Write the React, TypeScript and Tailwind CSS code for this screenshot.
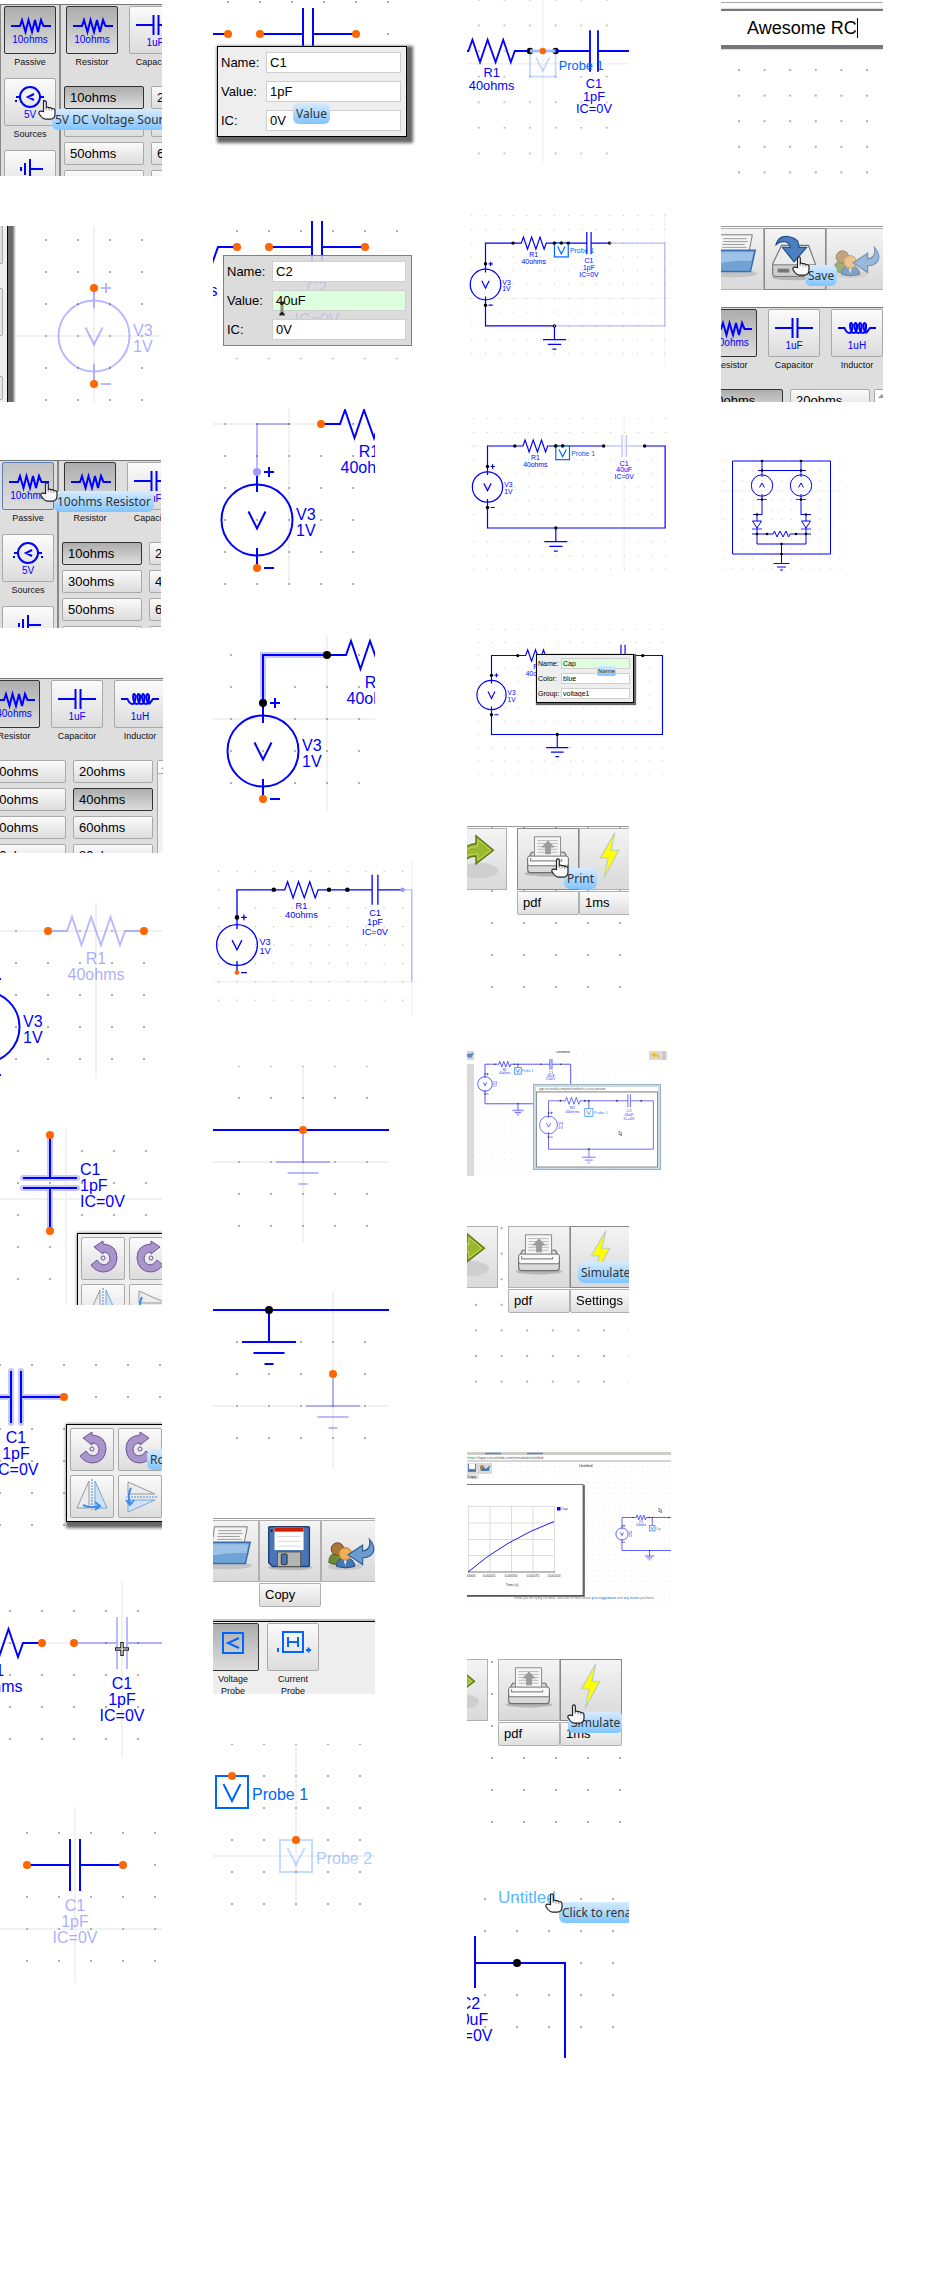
import React, { useId } from 'react';
import type { ReactNode } from 'react';

const BLUE = '#0000ff';
const ORANGE = '#ff6600';
const PROBE = '#0066ff';
const SANS = "'Liberation Sans', Arial, sans-serif";

type Pt = { x: number; y: number };

/* ---------- schematic primitives (grid pitch is 32 units) ---------- */

function Grid({ x, y, step = 32, dot = 2 }: Pt & { step?: number; dot?: number }) {
  const id = useId();
  return (
    <>
      <pattern id={id} x={x - dot / 2} y={y - dot / 2} width={step} height={step} patternUnits="userSpaceOnUse">
        <rect width={dot} height={dot} fill="#b0b0b0" />
      </pattern>
      <rect x="-1000" y="-1000" width="3000" height="3000" fill={`url(#${id})`} />
    </>
  );
}

function Cross({ x, y }: { x?: number; y?: number }) {
  return (
    <path
      d={`${x === undefined ? '' : `M${x} -1000V2000`}${y === undefined ? '' : `M-1000 ${y}H2000`}`}
      stroke="#f1f1f1"
      strokeWidth="2"
      fill="none"
    />
  );
}

function Node({ x, y, color = '#000' }: Pt & { color?: string }) {
  return <circle cx={x} cy={y} r="4" fill={color} />;
}

/* Line width is inherited, so that reduced drawings can use a heavier pen. */
function Stroke({ d, faint, halo, color = BLUE }: { d: string; faint?: boolean; halo?: boolean; color?: string }) {
  return (
    <>
      {halo && <path d={d} stroke="#c8c8ff" strokeWidth="6" strokeLinecap="round" fill="none" />}
      <path d={d} stroke={color} fill="none" opacity={faint ? 0.27 : 1} />
    </>
  );
}

function Lines({
  x,
  y,
  rows,
  anchor = 'start',
  faint,
  color = BLUE,
}: Pt & { rows: string[]; anchor?: 'start' | 'middle'; faint?: boolean; color?: string }) {
  return (
    <g fontFamily={SANS} fontSize="16" fill={color} textAnchor={anchor} opacity={faint ? 0.32 : 1}>
      {rows.map((r, i) => (
        <text key={r} x={x} y={y + i * 16}>
          {r}
        </text>
      ))}
    </g>
  );
}

function Source({ x, y, faint, rows = ['V3', '1V'] }: Pt & { faint?: boolean; rows?: string[] }) {
  return (
    <>
      <g transform={`translate(${x} ${y})`} opacity={faint ? 0.27 : 1} stroke={BLUE} fill="none">
        <circle r="35.5" />
        <path d="M0 -48V-28M0 28V48M-8.500 -8.500L0 8.500L8.500 -8.500M7 -48H17M12 -53V-43M7 48H17" />
      </g>
      <Lines x={x + 39} y={y} rows={rows} faint={faint} />
    </>
  );
}

function Resistor({ x, y, faint, rows = ['R1', '40ohms'] }: Pt & { faint?: boolean; rows?: string[] }) {
  return (
    <>
      <g transform={`translate(${x} ${y})`}>
        <Stroke
          faint={faint}
          d="M-48 0H-29L-24 -14L-14.500 14L-5 -14L5 14L14.500 -14L24 14L29 0H48"
        />
      </g>
      <Lines x={x} y={y + 33} rows={rows} anchor="middle" faint={faint} />
    </>
  );
}

function Capacitor({
  x,
  y,
  faint,
  halo,
  faintLabel,
  rows = ['C1', '1pF', 'IC=0V'],
}: Pt & { faint?: boolean; halo?: boolean; faintLabel?: boolean; rows?: string[] }) {
  return (
    <>
      <g transform={`translate(${x} ${y})`}>
        <Stroke faint={faint} halo={halo} d="M-48 0H-5M-5 -26V26M5 -26V26M5 0H48" />
      </g>
      <Lines x={x} y={y + 46} rows={rows} anchor="middle" faint={faintLabel} />
    </>
  );
}

function Ground({ x, y, faint }: Pt & { faint?: boolean }) {
  return (
    <g transform={`translate(${x} ${y})`}>
      <Stroke faint={faint} d="M0 0V32M-27 32H27M-15.500 43H15.500M-4.500 54H4.500" />
    </g>
  );
}

function Probe({
  x,
  y,
  faint,
  faintLabel,
  label,
}: Pt & { faint?: boolean; faintLabel?: boolean; label: string }) {
  return (
    <>
      <g transform={`translate(${x} ${y})`} opacity={faint ? 0.22 : 1}>
        <rect x="-16" y="0" width="32" height="32" fill={faint ? 'none' : '#fff'} stroke={PROBE} />
        <path d="M-8.500 8L0 25L8.500 8" stroke={PROBE} fill="none" />
      </g>
      <Lines x={x + 20} y={y + 24} rows={[label]} color={PROBE} faint={faintLabel} />
    </>
  );
}

/* ---------- frames ---------- */

function Shot({ size, label, children }: { size: string; label: string; children: ReactNode }) {
  return (
    <figure aria-label={label} className={`relative shrink-0 overflow-hidden bg-white ${size}`}>
      {children}
    </figure>
  );
}

function Canvas({ children }: { children: ReactNode }) {
  return (
    <svg className="absolute inset-0 size-full" strokeWidth="2" aria-hidden="true">
      {children}
    </svg>
  );
}

function Tip({ place, small, children }: { place: string; small?: boolean; children: ReactNode }) {
  return (
    <span
      role="tooltip"
      className={`absolute z-10 whitespace-nowrap bg-linear-to-b from-[#d6ebff] to-[#80c5ff] font-['Noto_Sans',sans-serif] text-[#333] ${
        small ? 'rounded-xs px-px text-[6px] leading-[10px]' : 'rounded-md px-[3px] text-[12px] leading-[21px]'
      } ${place}`}
    >
      {children}
    </span>
  );
}

function Hand({ place }: { place: string }) {
  return (
    <svg className={`absolute z-20 h-5 w-[18px] ${place}`} viewBox="0 0 18 20" aria-hidden="true">
      <path
        d="M5.500 11.500V2.200Q5.500 .8 6.900 .8T8.300 2.200V7.500Q9.500 6.500 11 7.800Q12.500 7 13.800 8.600Q17 8 17 11V14.500Q16.500 19 12.500 19.200H7.500Q5 19 3 16.500L.9 13.500Q.6 11 3 11.200Z"
        fill="#fafafa"
        stroke="#222"
        strokeWidth="1.200"
      />
      <path d="M8.300 7.500V10M11 8V10.500M13.800 8.600V11" stroke="#777" strokeWidth=".8" />
    </svg>
  );
}

/* ---------- component palette ---------- */

const face = 'overflow-hidden rounded-xs border bg-linear-to-b';
const plain = 'border-[#a9a9a9] from-[#fbfbfb] to-[#dcdcdc]';
const pressed = 'border-[#333] from-[#adadad] to-[#dedede]';
const hovered = 'border-[#5b7fb5] from-[#c2c2c2] to-[#dedede]';

const glyphs: Record<string, ReactNode> = {
  resistor: <path d="M6 19H15L17 13L20.500 25L23.500 13L27 25L30 13L33 25L36 13L38.500 19H46" />,
  capacitor: <path d="M6 18H22.500M23.500 8V28M28.500 8V28M29.500 18H44" />,
  inductor: (
    <path d="M6 18H12.500Q14.500 23 17.500 23T20.500 14.500Q18.500 11 18 15.500Q18.500 23 22 23T25 14.500Q23 11 22.500 15.500Q23 23 26.500 23T29.500 14.500Q27.500 11 27 15.500Q27.500 23 31 23T34 14.500Q32 11 31.500 15.500Q32 23 34.500 22.500L38 18H44" />
  ),
  source: (
    <>
      <circle cx="25" cy="18" r="10" />
      <path d="M11 18H15M35 18H39M29 15L23 18L29 21M11 21V23M39 21V23" />
    </>
  ),
  ground: <path d="M25 8V28M25 18H38M20 12V24M16 16V20" />,
};

function PartButton({
  glyph,
  value,
  name,
  look = plain,
}: {
  glyph: string;
  value: string;
  name: string;
  look?: string;
}) {
  return (
    <div className="flex w-[52px] shrink-0 flex-col items-center">
      <button type="button" aria-label={name} className={`h-12 w-[52px] ${face} ${look}`}>
        <svg viewBox="0 0 50 46" className="h-[46px] w-[50px]" aria-hidden="true">
          <g stroke={BLUE} strokeWidth="2" fill="none">
            {glyphs[glyph]}
          </g>
          <text
            x="25"
            y={glyph === 'resistor' ? 36 : 39}
            textAnchor="middle"
            fontFamily={SANS}
            fontSize="10"
            fill={BLUE}
          >
            {value}
          </text>
        </svg>
      </button>
      <span className="h-6 pt-[2px] text-[9px] leading-3 text-[#111]">{name}</span>
    </div>
  );
}

function PartRow({ ohms }: { ohms: string }) {
  return (
    <div className="flex gap-[11px] pl-[5px]">
      <PartButton glyph="resistor" value={ohms} name="Resistor" look={pressed} />
      <PartButton glyph="capacitor" value="1uF" name="Capacitor" />
      <PartButton glyph="inductor" value="1uH" name="Inductor" />
    </div>
  );
}

function Values({ active }: { active: string }) {
  return (
    <div className="flex pl-[3px] pt-2">
      <div className="grid grid-cols-[80px_80px] gap-x-[7px] gap-y-[5px]">
        {['10ohms', '20ohms', '30ohms', '40ohms', '50ohms', '60ohms', '70ohms', '80ohms'].map((v) => (
          <button
            key={v}
            type="button"
            className={`h-[23px] pl-[5px] text-left text-[13px] leading-5 text-black ${face} ${
              v === active ? pressed : plain
            }`}
          >
            {v}
          </button>
        ))}
      </div>
      <div className="ml-1 w-4 shrink-0 rounded-t-xs border border-[#a9a9a9] bg-[#f2f2f2]">
        <div className="flex h-[13px] items-center justify-center border-b border-[#a9a9a9] bg-white">
          <svg viewBox="0 0 8 4" className="h-1 w-2" aria-hidden="true">
            <path d="M0 4L4 0L8 4Z" fill="#999" />
          </svg>
        </div>
      </div>
    </div>
  );
}

function Palette({ hover, shift }: { hover: 'passive' | 'sources'; shift: string }) {
  return (
    <div className={`flex h-full border-t border-[#777] bg-[#dedede] ${shift}`}>
      <div className="w-[61px] shrink-0 border-r-2 border-l border-[#888] pt-px pl-[3px]">
        <PartButton
          glyph="resistor"
          value="10ohms"
          name="Passive"
          look={hover === 'passive' ? hovered : pressed}
        />
        <PartButton glyph="source" value="5V" name="Sources" />
        <PartButton glyph="ground" value="" name="Ground" />
      </div>
      <div className="shrink-0 pt-px">
        <PartRow ohms="10ohms" />
        <Values active="10ohms" />
      </div>
    </div>
  );
}

/* ---------- toolbar ---------- */

function FolderIcon() {
  return (
    <svg viewBox="0 0 62 62" className="size-[60px]" aria-hidden="true">
      <ellipse cx="30" cy="46" rx="26" ry="4" fill="#c4c4c4" />
      <path d="M17 6H51L47 26L14 28Z" fill="#f4f4f4" stroke="#777" />
      <path d="M21 10H45M21 13H46M20 16H43M20 19H45" stroke="#999" />
      <path d="M8 22H54L49 44H4Z" fill="#6fa3d6" stroke="#3a6ca8" strokeWidth="1.500" />
      <path d="M10 24H52L50 33Q30 32 8 37Z" fill="#9cc2e6" />
    </svg>
  );
}

function FloppyIcon() {
  return (
    <svg viewBox="0 0 62 62" className="size-[60px]" aria-hidden="true">
      <ellipse cx="31" cy="48" rx="23" ry="3" fill="#b9b9b9" />
      <path d="M9 7Q9 6 10 6H50Q51 6 51 7V46Q51 47 50 47H13L9 43Z" fill="#4a74b4" stroke="#1f3f75" strokeWidth="1.500" />
      <rect x="15" y="7" width="30" height="23" fill="#fff" />
      <rect x="15" y="7" width="30" height="4" fill="#d41c00" />
      <path d="M18 16H42M18 21H42M18 26H42" stroke="#d5d5d5" />
      <rect x="11" y="9" width="2" height="2" fill="#111" />
      <rect x="18" y="32" width="24" height="15" rx="1" fill="#b5b5b0" stroke="#555" />
      <rect x="22" y="34" width="6" height="11" rx="1" fill="#4a74b4" stroke="#333" />
    </svg>
  );
}

function ShareIcon() {
  return (
    <svg viewBox="0 0 62 62" className="size-[60px]" aria-hidden="true">
      <ellipse cx="24" cy="47" rx="18" ry="4" fill="#c9c9c9" />
      <path d="M7 43Q7 33 16 33T25 43Q16 47 7 43Z" fill="#6d8b35" stroke="#47611c" />
      <circle cx="16" cy="29" r="6.500" fill="#a9773a" stroke="#6b4518" />
      <path d="M15 47Q15 38 24 38T34 47Q24 50 15 47Z" fill="#4577b5" stroke="#224a85" />
      <path d="M22 38L24 46L26 38Z" fill="#fff" />
      <circle cx="24" cy="34" r="6.500" fill="#f2ae55" stroke="#b87418" />
      <path
        d="M49 19Q55 26 53 32Q50 38 42 38V45L27 35L42 25V31Q51 30 49 19Z"
        fill="#6b9bd1"
        stroke="#2e5c99"
        strokeWidth="1.200"
      />
    </svg>
  );
}

function ForwardIcon() {
  return (
    <svg viewBox="0 0 62 62" className="size-[60px]" aria-hidden="true">
      <ellipse cx="34" cy="43" rx="20" ry="8" fill="#cfcfcf" />
      <path d="M31 7L49 22L31 36V28Q20 28 16 38Q10 18 31 15Z" fill="#99b82c" stroke="#5f7a10" strokeWidth="1.500" />
      <path d="M33 11L46 22L33 32V26Q22 25 17 32Q16 19 33 18Z" fill="none" stroke="#c3d96c" />
    </svg>
  );
}

function PrinterIcon() {
  return (
    <svg viewBox="0 0 62 62" className="size-[60px]" aria-hidden="true">
      <ellipse cx="31" cy="46" rx="24" ry="3" fill="#b5b5b5" />
      <path d="M14 24H48L52 32V42Q52 45 49 45H13Q10 45 10 42V32Z" fill="#dadada" stroke="#6e6e6e" strokeWidth="1.200" />
      <path d="M17 8H44V30H17Z" fill="#f5f5f5" stroke="#888" />
      <path d="M20 12H41M20 15H41M20 18H41M20 21H41M20 24H41" stroke="#b9b9b9" />
      <path d="M31 12L38 19H34V26H28V19H24Z" fill="#9b9b9b" />
      <rect x="10" y="28" width="42" height="10" rx="2" fill="#fafafa" stroke="#6e6e6e" />
      <path d="M13 30V33H45V31" fill="none" stroke="#8a8a8a" strokeWidth="1.200" />
    </svg>
  );
}

function BoltIcon() {
  return (
    <svg viewBox="0 0 62 62" className="size-[60px]" aria-hidden="true">
      <path d="M36 4L21 30H29L25 50L40 22H32Z" fill="#ffff00" stroke="#b9cfc0" strokeWidth="1.200" />
    </svg>
  );
}

function DriveIcon() {
  return (
    <svg viewBox="0 0 62 62" className="size-[60px]" aria-hidden="true">
      <ellipse cx="31" cy="50" rx="24" ry="3" fill="#b5b5b5" />
      <path d="M17 17H45L52 36V46Q52 49 49 49H11Q8 49 8 46V36Z" fill="#ececec" stroke="#777" strokeWidth="1.200" />
      <path d="M8 37H52V46Q52 49 49 49H11Q8 49 8 46Z" fill="#cfcfcf" stroke="#777" />
      <rect x="13" y="41" width="12" height="4" fill="#777" />
      <path
        d="M11 17Q14 6 25 8Q36 10 35 19H43L30 34L18 19H26Q25 13 19 13Q14 13 11 17Z"
        fill="#4b7fc0"
        stroke="#23508c"
        strokeWidth="1.200"
      />
    </svg>
  );
}

function Tool({
  name,
  icon,
  option,
  edge = 'border-[#b0b0b0]',
  fade,
}: {
  name: string;
  icon: ReactNode;
  option?: string;
  edge?: string;
  fade?: boolean;
}) {
  return (
    <div className="flex w-[62px] shrink-0 flex-col gap-px">
      <button
        type="button"
        aria-label={name}
        className={`h-[62px] w-[62px] overflow-hidden border bg-linear-to-b from-[#f4f4f4] to-[#d9d9d9] ${edge}`}
      >
        <span className={fade ? 'block opacity-60' : 'block'}>{icon}</span>
      </button>
      {option && (
        <button
          type="button"
          className="h-6 w-[62px] overflow-hidden rounded-b-xs border border-[#b0b0b0] bg-linear-to-b from-[#fafafa] to-[#dfdfdf] pl-[5px] text-left text-[13px] leading-[22px] text-black"
        >
          {option}
        </button>
      )}
    </div>
  );
}

/* ---------- property form ---------- */

function Form({
  rows,
  box,
  active,
  small,
}: {
  rows: [string, string][];
  box: string;
  active?: string;
  small?: boolean;
}) {
  const id = useId();
  return (
    <form className={`absolute flex flex-col border ${box} ${small ? 'gap-1 py-[3px] pr-[3px] pl-px' : 'gap-2 p-[5px] pl-[3px]'}`}>
      {rows.map(([name, value]) => (
        <div key={name} className="flex items-center">
          <label
            htmlFor={id + name}
            className={small ? 'w-[23px] text-[7px] leading-[11px]' : 'w-[45px] text-[13px] leading-[21px]'}
          >
            {name}:
          </label>
          <input
            id={id + name}
            defaultValue={value}
            className={`min-w-0 flex-1 border border-[#cfcfcf] text-black outline-none ${
              small ? 'h-[11px] px-px text-[7px]' : 'h-[21px] px-[3px] text-[13px]'
            } ${name === active ? 'bg-[#ddffdd]' : 'bg-white'}`}
          />
        </div>
      ))}
    </form>
  );
}

/* ---------- rotate / flip popup ---------- */

function TurnIcon({ flip }: { flip?: boolean }) {
  return (
    <svg viewBox="0 0 42 42" className="size-[42px]" aria-hidden="true">
      <g transform={flip ? 'translate(42 0) scale(-1 1)' : undefined}>
        <path
          d="M12 9L21 3V6Q35 7 35 20Q34 33 22 34Q14 34 9 27L15 22Q18 27 22 27Q28 26 28 20Q27 14 21 14V16Z"
          fill="#a995cc"
          stroke="#6d5399"
        />
        <circle cx="21" cy="20" r="2" fill="#eee" stroke="#6d5399" />
      </g>
    </svg>
  );
}

function MirrorIcon({ turn }: { turn?: boolean }) {
  return (
    <svg viewBox="0 0 42 42" className="size-[42px]" aria-hidden="true">
      <g transform={turn ? 'translate(0 1) rotate(90 21 20)' : undefined}>
        <path d="M18 5V32H6Z" fill="#ececec" stroke="#999" />
        <path d="M24 5V32H36Z" fill="#cfe3f7" stroke="#7fa6cf" />
        <path d="M21 3V34" stroke="#3a8cf0" strokeDasharray="2 1" />
        <path d="M12 29Q20 33 27 30M24 26L29 30L24 34" stroke="#3a8cf0" strokeWidth="2" fill="none" />
      </g>
    </svg>
  );
}

function TurnPopup({ place }: { place: string }) {
  const items: [string, ReactNode][] = [
    ['Rotate left', <TurnIcon />],
    ['Rotate right', <TurnIcon flip />],
    ['Mirror horizontally', <MirrorIcon />],
    ['Mirror vertically', <MirrorIcon turn />],
  ];
  return (
    <div
      className={`absolute grid grid-cols-[44px_44px] gap-1 border border-black bg-[#eee] p-[3px] shadow-[3px_3px_3px_3px_#666] ${place}`}
    >
      {items.map(([name, icon]) => (
        <button key={name} type="button" aria-label={name} className={`h-[43px] ${face} ${plain}`}>
          {icon}
        </button>
      ))}
    </div>
  );
}

/* ---------- columns ---------- */

function PlaceColumn() {
  return (
    <section className="flex w-[163px] shrink-0 flex-col gap-[50px]">
      <Shot size="h-[176px] w-[162px]" label="Voltage source in palette">
        <Palette hover="sources" shift="mt-1" />
        <Hand place="left-[38px] top-[100px]" />
        <Tip place="left-[52px] top-[109px]">5V DC Voltage Source</Tip>
      </Shot>
      <Shot size="h-[176px] w-[162px]" label="Placing voltage source">
        <Canvas>
          <Cross x={94} y={110} />
          <Grid x={14} y={14} />
          <Source x={94} y={110} faint />
          <Node x={94} y={62} color={ORANGE} />
          <Node x={94} y={158} color={ORANGE} />
        </Canvas>
        <div className="relative flex h-full w-4">
          <div className="w-[7px] bg-[#eee]">
            <div className="h-[38px] w-[3px] rounded-br-xs border-r border-b border-[#aaa] bg-[#ddd]" />
            <div className="mt-6 h-12 w-[3px] rounded-r-xs border-y border-r border-[#aaa] bg-[#e4e4e4]" />
            <div className="mt-10 h-6 w-[3px] rounded-r-xs border-y border-r border-[#aaa] bg-[#e4e4e4]" />
          </div>
          <div className="w-px bg-black" />
          <div className="w-[5px] bg-[#6b6b6b]" />
          <div className="w-[3px] bg-linear-to-r from-[#888] to-white" />
        </div>
      </Shot>
      <Shot size="h-[176px] w-[161px]" label="Resistor in palette">
        <Palette hover="passive" shift="mt-2 -ml-[2px]" />
        <Hand place="left-[40px] top-[30px]" />
        <Tip place="left-[54px] top-[39px]">10ohms Resistor</Tip>
      </Shot>
      <Shot size="h-[175px] w-[163px]" label="Resistor values">
        <div className="-ml-[17px] h-full w-[200px] border-t border-[#777] bg-[#dedede] pt-px">
          <PartRow ohms="40ohms" />
          <Values active="40ohms" />
        </div>
      </Shot>
      <Shot size="h-[176px] w-[162px]" label="Placing resistor">
        <Canvas>
          <Cross x={96} y={28} />
          <Grid x={16} y={28} />
          <Resistor x={96} y={28} faint />
          <Node x={48} y={28} color={ORANGE} />
          <Node x={144} y={28} color={ORANGE} />
          <Source x={-16} y={124} />
        </Canvas>
      </Shot>
      <Shot size="h-[176px] w-[162px]" label="Selected capacitor">
        <Canvas>
          <Cross x={66} y={70} />
          <Grid x={18} y={22} />
          <g transform="translate(50 54)">
            <Stroke halo d="M0 -48V-5M-27 -5H27M-27 5H27M0 5V48" />
          </g>
          <Lines x={80} y={46} rows={['C1', '1pF', 'IC=0V']} />
          <Node x={50} y={6} color={ORANGE} />
          <Node x={50} y={102} color={ORANGE} />
        </Canvas>
        <TurnPopup place="left-[77px] top-[104px]" />
      </Shot>
      <Shot size="h-[176px] w-[162px]" label="Rotated capacitor">
        <Canvas>
          <Grid x={0} y={10} />
          <Capacitor x={16} y={42} halo />
          <Node x={64} y={42} color={ORANGE} />
        </Canvas>
        <TurnPopup place="left-[66px] top-[69px]" />
        <Tip place="left-[147px] top-[94px]">Rotate</Tip>
      </Shot>
      <Shot size="h-[176px] w-[162px]" label="Dragging capacitor">
        <Canvas>
          <Cross x={122} y={62} />
          <Grid x={10} y={30} />
          <Resistor x={-6} y={62} />
          <Node x={42} y={62} color={ORANGE} />
          <Capacitor x={122} y={62} faint />
          <Node x={74} y={62} color={ORANGE} />
          <path d="M122 61V75M115 68H129" stroke="#222" strokeWidth="3.500" />
          <path d="M122 62V74M116 68H128" stroke="#fff" strokeWidth="1.200" />
        </Canvas>
      </Shot>
      <Shot size="h-[176px] w-[162px]" label="Moving capacitor label">
        <Canvas>
          <Cross x={75} y={122} />
          <Grid x={27} y={26} />
          <Capacitor x={75} y={58} faintLabel />
          <Node x={27} y={58} color={ORANGE} />
          <Node x={123} y={58} color={ORANGE} />
        </Canvas>
      </Shot>
    </section>
  );
}

function WireColumn() {
  return (
    <section className="flex w-[204px] shrink-0 flex-col gap-[50px]">
      <Shot size="h-[167px] w-[204px]" label="Editing C1">
        <Canvas>
          <Grid x={15} y={2} />
          <rect y="46" width="204" height="121" fill="#fff" />
          <Stroke d="M0 34H15" />
          <Capacitor x={95} y={34} rows={[]} />
          <Node x={15} y={34} color={ORANGE} />
          <Node x={47} y={34} color={ORANGE} />
          <Node x={143} y={34} color={ORANGE} />
        </Canvas>
        <Form
          box="left-1 top-[46px] w-[190px] border-black bg-[#eee] shadow-[3px_3px_3px_3px_#666]"
          rows={[
            ['Name', 'C1'],
            ['Value', '1pF'],
            ['IC', '0V'],
          ]}
        />
        <Tip place="left-[80px] top-[103px]">Value</Tip>
      </Shot>
      <Shot size="h-[142px] w-[204px]" label="Editing C2">
        <Canvas>
          <Grid x={24} y={14} />
          <Resistor x={-24} y={30} />
          <Node x={24} y={30} color={ORANGE} />
          <Capacitor x={104} y={30} rows={['C2', '1pF', 'IC=0V']} />
          <Node x={56} y={30} color={ORANGE} />
          <Node x={152} y={30} color={ORANGE} />
        </Canvas>
        <Form
          box="left-[10px] top-[38px] w-[189px] border-[#808080] bg-[#d8d8d8]/90"
          active="Value"
          rows={[
            ['Name', 'C2'],
            ['Value', '40uF'],
            ['IC', '0V'],
          ]}
        />
        <svg className="absolute left-[65px] top-[84px] h-[15px] w-2" viewBox="0 0 8 15" aria-hidden="true">
          <path
            d="M1.500 1.500Q4 1.500 4 3.500V11.500Q4 13.500 1.500 13.500M6.500 1.500Q4 1.500 4 3.500M4 11.500Q4 13.500 6.500 13.500"
            stroke="#222"
            strokeWidth="2.500"
            fill="none"
          />
          <path d="M4 4V11" stroke="#fff" />
        </svg>
      </Shot>
      <Shot size="h-[176px] w-[162px]" label="Drawing a wire">
        <Canvas>
          <Cross x={76} y={15} />
          <Grid x={12} y={15} />
          <Stroke faint d="M44 63V15H77" />
          <Source x={44} y={111} />
          <Node x={44} y={63} color="#9c9cff" />
          <Node x={44} y={159} color={ORANGE} />
          <Resistor x={156} y={15} />
          <Node x={108} y={15} color={ORANGE} />
        </Canvas>
      </Shot>
      <Shot size="h-[176px] w-[162px]" label="Finished wire">
        <Canvas>
          <Cross x={114} y={84} />
          <Grid x={18} y={20} />
          <Stroke halo d="M50 68V20H114" />
          <Source x={50} y={116} />
          <Resistor x={162} y={20} />
          <Node x={50} y={68} />
          <Node x={114} y={20} />
          <Node x={50} y={164} color={ORANGE} />
        </Canvas>
      </Shot>
      <Shot size="h-[155px] w-[204px]" label="Wiring the capacitor">
        <Canvas>
          <g transform="translate(24 84) scale(.575)" strokeWidth="2.300">
            <Cross x={304} y={64} />
            <Grid x={0} y={0} />
            <Stroke d="M0 -48V-96H64M160 -96H192" />
            <Stroke faint d="M288 -96H304V64" />
            <Source x={0} y={0} />
            <Resistor x={112} y={-96} />
            <Capacitor x={240} y={-96} />
            <Node x={0} y={-48} />
            <Node x={0} y={48} color={ORANGE} />
            <Node x={64} y={-96} />
            <Node x={160} y={-96} />
            <Node x={192} y={-96} />
            <Node x={288} y={-96} color="#9c9cff" />
          </g>
        </Canvas>
      </Shot>
      <Shot size="h-[176px] w-[176px]" label="Placing ground">
        <Canvas>
          <Cross x={90} y={96} />
          <Grid x={26} y={0} />
          <Stroke d="M0 64H176" />
          <Ground x={90} y={64} faint />
          <Node x={90} y={64} color={ORANGE} />
        </Canvas>
      </Shot>
      <Shot size="h-[176px] w-[176px]" label="Ground placed">
        <Canvas>
          <Cross x={120} y={114} />
          <Grid x={24} y={18} />
          <Stroke d="M0 18H176" />
          <Ground x={56} y={18} />
          <Node x={56} y={18} />
          <Ground x={120} y={82} faint />
          <Node x={120} y={82} color={ORANGE} />
        </Canvas>
      </Shot>
      <Shot size="h-[176px] w-[162px]" label="Probes in palette">
        <div className="flex h-[101px] border-t border-[#999] pt-px">
          <div className="-ml-4 flex">
            <Tool name="Open" icon={<FolderIcon />} />
            <Tool name="Save" icon={<FloppyIcon />} option="Copy" />
            <Tool name="Share" icon={<ShareIcon />} />
          </div>
        </div>
        <div className="h-[75px] border-t-2 border-[#c4c4c4] bg-[#eee]">
          <div className="flex gap-2 border-t border-black pt-px">
            <div className="-ml-[6px] flex w-[52px] flex-col items-center text-center text-[9px] leading-3 text-[#111]">
              <button type="button" aria-label="Voltage Probe" className={`h-12 w-[52px] ${face} ${pressed}`}>
                <svg viewBox="0 0 50 46" className="h-[46px] w-[50px]" aria-hidden="true">
                  <path d="M15 9H35V29H15ZM31 14L20 19L31 24" stroke={PROBE} strokeWidth="2" fill="none" />
                </svg>
              </button>
              <span className="w-10 pt-[2px]">Voltage Probe</span>
            </div>
            <div className="flex w-[52px] flex-col items-center text-center text-[9px] leading-3 text-[#111]">
              <button type="button" aria-label="Current Probe" className={`h-12 w-[52px] ${face} ${plain}`}>
                <svg viewBox="0 0 50 46" className="h-[46px] w-[50px]" aria-hidden="true">
                  <path
                    d="M15 8H35V28H15ZM20 13V23M30 13V23M20 18H30M10 24V28M38 26H43M40.500 23.500V28.500"
                    stroke={PROBE}
                    strokeWidth="2"
                    fill="none"
                  />
                </svg>
              </button>
              <span className="w-10 pt-[2px]">Current Probe</span>
            </div>
          </div>
        </div>
      </Shot>
      <Shot size="h-[162px] w-[162px]" label="Placing probes">
        <Canvas>
          <Cross x={83} y={112} />
          <Grid x={19} y={0} />
          <Probe x={19} y={32} label="Probe 1" />
          <Node x={19} y={32} color={ORANGE} />
          <Probe x={83} y={96} label="Probe 2" faint faintLabel />
          <Node x={83} y={96} color={ORANGE} />
        </Canvas>
      </Shot>
    </section>
  );
}

/* Outer loop of the RC circuit: source, ground and the wires around them. */
function Loop({ resistor = 112, probe = 176, close = true }: { resistor?: number; probe?: number; close?: boolean }) {
  return (
    <>
      <Stroke d={`M0 -48V-96H${resistor - 48}M0 48V96H160`} />
      {close && <Stroke d="M160 96H416V-96H368" />}
      <Source x={0} y={0} />
      <Ground x={160} y={96} />
      <Node x={0} y={-48} />
      <Node x={0} y={48} />
      <Node x={resistor - 48} y={-96} />
      <Node x={resistor + 48} y={-96} />
      <Node x={probe} y={-96} />
      <Node x={160} y={96} />
    </>
  );
}

function SimulateColumn() {
  return (
    <section className="flex w-[204px] shrink-0 flex-col gap-[50px]">
      <Shot size="h-[162px] w-[162px]" label="Probe on the wire">
        <Canvas>
          <g transform="translate(63 51) scale(.8)" strokeWidth="2.300">
            <Cross x={16} y={16} />
            <Grid x={0} y={0} />
            <Resistor x={-48} y={0} />
            <Node x={0} y={0} />
            <Node x={32} y={0} />
            <path d="M0 0H32" stroke="#c4d4ff" strokeWidth="4" />
            <Stroke d="M128 0H200" />
            <Capacitor x={80} y={0} />
            <Probe x={16} y={0} label="Probe 1" faint />
            <Node x={16} y={0} color={ORANGE} />
          </g>
        </Canvas>
      </Shot>
      <Shot size="h-[154px] w-[204px]" label="Closing the loop">
        <Canvas>
          <g transform="translate(18.500 72.500) scale(.431)" strokeWidth="2.800">
            <Cross x={416} y={32} />
            <Grid x={0} y={0} />
            <Stroke faint d="M288 -96H416V96H160" />
            <Stroke d="M160 -96H192" />
            <Loop close={false} />
            <Resistor x={112} y={-96} />
            <Capacitor x={240} y={-96} />
            <Probe x={176} y={-96} label="Probe 1" />
            <Node x={160} y={-96} />
            <Node x={176} y={-96} />
            <Node x={192} y={-96} />
            <Node x={288} y={-96} />
            <circle cx="160" cy="96" r="1.500" fill="#fff" />
            <circle cx="289" cy="-96" r="1.500" fill="#fff" />
          </g>
        </Canvas>
      </Shot>
      <Shot size="h-[155px] w-[204px]" label="Moving the capacitor">
        <Canvas>
          <g transform="translate(20.500 71) scale(.427)" strokeWidth="2.800">
            <Cross x={320} y={-96} />
            <Grid x={0} y={0} />
            <Stroke d="M160 -96H272" />
            <Loop />
            <Resistor x={112} y={-96} />
            <Capacitor x={320} y={-96} faint rows={['C1', '40uF', 'IC=0V']} />
            <Probe x={176} y={-96} label="Probe 1" />
            <Node x={160} y={-96} />
            <Node x={176} y={-96} />
            <Node x={272} y={-96} />
            <Node x={368} y={-96} />
          </g>
        </Canvas>
      </Shot>
      <Shot size="h-[155px] w-[204px]" label="Naming the probe">
        <Canvas>
          <g transform="translate(24.500 74) scale(.411)" strokeWidth="2.800">
            <Grid x={0} y={0} />
            <Loop />
            <Resistor x={112} y={-96} />
            <Capacitor x={320} y={-96} rows={[]} />
            <Node x={368} y={-96} />
          </g>
        </Canvas>
        <Form
          small
          box="left-[69px] top-[33px] w-[98px] border-black bg-[#eee] shadow-[1px_1px_1px_1px_#666]"
          active="Name"
          rows={[
            ['Name', 'Cap'],
            ['Color', 'blue'],
            ['Group', 'voltage1'],
          ]}
        />
        <Tip small place="left-[130px] top-[45px]">
          Name
        </Tip>
      </Shot>
      <Shot size="h-[175px] w-[162px]" label="Print button">
        <Canvas>
          <Grid x={25} y={1} />
        </Canvas>
        <div className="relative flex border-t border-[#999] pt-px">
          <div className="-ml-[22px] mr-[10px]">
            <Tool name="Redo" icon={<ForwardIcon />} />
          </div>
          <Tool name="Print" icon={<PrinterIcon />} option="pdf" edge="border-[#888]" />
          <Tool name="Simulate" icon={<BoltIcon />} option="1ms" />
        </div>
        <Hand place="left-[84px] top-[32px]" />
        <Tip place="left-[97px] top-[42px]">Print</Tip>
      </Shot>
      <Shot size="h-[125px] w-[200px]" label="Print preview">
        <Canvas>
          <Grid x={12} y={4} step={6.5} dot={0.5} />
          <rect width="7" height="9" fill="#d5d5d5" />
          <path d="M0 3L7 2L4 7L0 6Z" fill="#5b8cc8" />
          <rect y="13" width="7" height="112" fill="#dadada" />
          <text x="89" y="2" fontFamily={SANS} fontSize="4" fill="#222">
            Untitled
          </text>
          <rect x="182" y="0" width="18" height="9" fill="#dadada" />
          <path d="M184 4L188 1V3Q193 3 192 7Q190 5 188 5V7Z" fill="#e6c21d" />
          <path d="M197 .5V9" stroke="#aaa" strokeWidth="1" />
          <g transform="translate(18 33) scale(.206)" strokeWidth="4" opacity=".8">
            <Stroke d="M144 -96H272" />
            <Loop resistor={96} probe={160} />
            <Resistor x={96} y={-96} />
            <Stroke d="M160 -96V-80" />
            <Probe x={160} y={-80} label="Probe 1" />
            <Capacitor x={320} y={-96} rows={['C1', '40uF', 'IC=0V']} />
            <Node x={272} y={-96} />
            <Node x={368} y={-96} />
          </g>
          <rect x="66.500" y="33.500" width="127" height="85" fill="#c9dbe6" stroke="#9fb3bf" strokeWidth="1" />
          <rect x="69" y="36" width="122" height="4" fill="#fff" />
          <text x="72" y="39" fontFamily={SANS} fontSize="3" fill="#555">
            app.circuitslab.com/print/untitled-rc-circuit-preview
          </text>
          <rect x="69.500" y="41" width="121" height="75" fill="#fff" stroke="#8f8f8f" strokeWidth="1" />
          <g transform="translate(81.500 74) scale(.252)" strokeWidth="3" opacity=".75">
            <Stroke d="M144 -96H272" />
            <Loop resistor={96} probe={160} />
            <Resistor x={96} y={-96} rows={['R2', '40ohms']} />
            <Stroke d="M160 -96V-66" />
            <Probe x={160} y={-66} label="Probe 1" />
            <Capacitor x={320} y={-96} rows={['C2', '40uF', 'IC=0V']} />
            <Node x={272} y={-96} />
            <Node x={368} y={-96} />
          </g>
          <path d="M152 80V84L153 83L154 85L155 84L154 82.500H155Z" fill="#fff" stroke="#333" strokeWidth=".5" />
        </Canvas>
      </Shot>
      <Shot size="h-[176px] w-[162px]" label="Simulate button">
        <Canvas>
          <Grid x={9} y={2} step={25.6} />
        </Canvas>
        <div className="relative flex">
          <div className="-ml-[31px] mr-[10px]">
            <Tool name="Redo" icon={<ForwardIcon />} />
          </div>
          <Tool name="Print" icon={<PrinterIcon />} option="pdf" />
          <Tool name="Simulate" icon={<BoltIcon />} option="Settings" edge="border-[#888]" />
        </div>
        <Tip place="left-[111px] top-[36px]">Simulate</Tip>
      </Shot>
      <Shot size="h-[154px] w-[204px]" label="Simulation result">
        <Canvas>
          <Grid x={120} y={14} step={5.5} dot={0.5} />
          <rect width="204" height="3" fill="#cfcdca" />
          <path d="M18 1.500H34M60 1.500H76" stroke="#5b8cc8" strokeWidth="1.500" />
          <rect y="3" width="204" height="6" fill="#fff" />
          <path d="M0 9H204" stroke="#aaa" strokeWidth="1" />
          <text y="7" fontFamily={SANS} fontSize="4" fill="#555">
            <tspan fill="#2d9a45">https</tspan>://app.circuitslab.com/simulate/untitled
          </text>
          <rect y="11" width="25" height="11" fill="#dadada" />
          <rect y="22" width="12" height="5" fill="#e4e4e4" />
          <rect x="1" y="12" width="8" height="8" fill="#5b7fb5" />
          <rect x="2" y="12" width="6" height="5" fill="#fff" />
          <path d="M13 16L16 14L19 17L23 13L22 19H14Z" fill="#4a7ab5" />
          <circle cx="15" cy="15" r="2" fill="#b9802f" />
          <text x="0" y="26" fontFamily={SANS} fontSize="4" fill="#222">
            Copy
          </text>
          <text x="112" y="15" fontFamily={SANS} fontSize="4" fill="#222">
            Untitled
          </text>
          <rect x="-2" y="32.500" width="118" height="111" fill="#fff" stroke="#777" strokeWidth="1" />
          <path d="M117 33V144H0" stroke="#4d4d4d" strokeWidth="1.500" fill="none" />
          <path
            d="M1 54.500H87M1 71H87M1 87.500H87M1 103.500H87M1.500 54V120M23 54V120M44.500 54V120M66 54V120M87.500 54V120"
            stroke="#d5d5d5"
            strokeWidth=".8"
          />
          <path d="M1 120H88" stroke="#555" strokeWidth=".8" />
          <path d="M1 120Q38 88 87 69.500" stroke={BLUE} strokeWidth=".9" fill="none" />
          <rect x="90" y="55" width="3.500" height="3.500" fill={BLUE} />
          <g fontFamily={SANS} fontSize="3.500" fill="#333" textAnchor="middle">
            <text x="97.500" y="58">
              Cap
            </text>
            <text x="2" y="125">
              0.00000
            </text>
            <text x="22" y="125">
              0.00025
            </text>
            <text x="44" y="125">
              0.00050
            </text>
            <text x="66" y="125">
              0.00075
            </text>
            <text x="87" y="125">
              0.00100
            </text>
            <text x="45" y="134">
              Time (s)
            </text>
          </g>
          <g transform="translate(155 82) scale(.172)" strokeWidth="4.500" opacity=".8">
            <Stroke d="M144 -96H290M160 96H300" />
            <Loop close={false} />
            <Resistor x={112} y={-96} />
            <Stroke d="M176 -96V-50" />
            <Probe x={176} y={-50} label="Cap" />
            <Node x={272} y={-96} />
          </g>
          <path d="M192 56V60L193 59L194 61L195 60L194 58.500H195Z" fill="#fff" stroke="#333" strokeWidth=".5" />
          <text x="46" y="147" fontFamily={SANS} fontSize="3.300" fill="#777">
            Thank you for trying our beta. We&apos;d like to hear about <tspan fill="#1d6fd1">your suggestions</tspan> and{' '}
            <tspan fill="#1d6fd1">any issues</tspan> you have.
          </text>
        </Canvas>
      </Shot>
      <Shot size="h-[176px] w-[155px]" label="Simulation duration">
        <Canvas>
          <Grid x={25} y={6} />
        </Canvas>
        <div className="relative flex pt-[3px]">
          <div className="-ml-[41px] mr-[10px]">
            <Tool name="Redo" icon={<ForwardIcon />} />
          </div>
          <Tool name="Print" icon={<PrinterIcon />} option="pdf" />
          <Tool name="Simulate" icon={<BoltIcon />} option="1ms" edge="border-[#888]" />
        </div>
        <Hand place="left-[100px] top-[48px]" />
        <Tip place="left-[101px] top-[56px]">Simulate</Tip>
      </Shot>
      <Shot size="h-[176px] w-[162px]" label="Renaming the circuit">
        <Canvas>
          <Grid x={18} y={17} />
          <Stroke d="M8 54V106M8 81H98V176" />
          <Lines x={3} y={127} rows={['C2', '40uF', 'IC=0V']} anchor="middle" />
          <Node x={50} y={81} />
        </Canvas>
        <span className="absolute left-[31px] top-1 text-[17px] leading-6 text-[#5bb8ff]">Untitled</span>
        <Hand place="left-[78px] top-[11px]" />
        <Tip place="left-[92px] top-[20px]">Click to rename</Tip>
      </Shot>
    </section>
  );
}

function CurrentSource({ x }: { x: number }) {
  return (
    <g stroke={BLUE} fill="none" strokeWidth="1">
      <circle cx={x} cy="33.500" r="10.700" />
      <path d={`M${x} 9V25M${x} 42V63M${x - 2.5} 35.500L${x} 31L${x + 2.5} 35.500`} />
    </g>
  );
}

function SaveColumn() {
  const joints: [number, number][] = [
    [41, 9],
    [80, 9],
    [41, 18.5],
    [80, 18.5],
    [41, 47.5],
    [80, 47.5],
    [36, 62.5],
    [85, 62.5],
    [36, 82],
    [85, 82],
    [46, 82],
    [75, 82],
    [60.5, 92],
    [60.5, 102],
  ];
  return (
    <section className="flex w-[162px] shrink-0 flex-col gap-[50px]">
      <Shot size="h-[176px] w-[162px]" label="Circuit title">
        <Canvas>
          <Grid x={18} y={70} step={25.6} />
          <rect width="162" height="50" fill="#fff" />
        </Canvas>
        <div className="relative pt-[2px]">
          <div className="h-[7px] border-t border-[#aaa]" />
          <div className="flex h-[40px] items-center border-t-2 border-b-4 border-[#777] pl-[26px] shadow-[0_0_2px_#999]">
            <input
              aria-label="Circuit title"
              defaultValue="Awesome RC"
              className="w-[110px] bg-transparent text-[18px] leading-7 text-black outline-none"
            />
            <span className="h-5 w-px bg-black" />
          </div>
        </div>
      </Shot>
      <Shot size="h-[176px] w-[162px]" label="Save button">
        <div className="relative flex h-[81px] border-t border-[#999] pt-px">
          <div className="-ml-[19px] flex">
            <Tool name="Open" icon={<FolderIcon />} />
            <Tool name="Save" icon={<DriveIcon />} edge="border-[#888]" />
            <Tool name="Share" icon={<ShareIcon />} fade />
          </div>
        </div>
        <Hand place="left-[71px] top-[30px]" />
        <Tip place="left-[84px] top-[39px]">Save</Tip>
        <div className="-ml-[21px] h-[95px] w-[200px] border-t border-[#777] bg-[#dedede] pt-px">
          <PartRow ohms="10ohms" />
          <Values active="10ohms" />
        </div>
      </Shot>
      <Shot size="h-[130px] w-[162px]" label="Finished circuit">
        <Canvas>
          <svg width="120" height="118">
            <Grid x={2} y={9} step={9.75} dot={0.8} />
          </svg>
          <path d="M0 39H120" stroke="#f1f1f1" strokeWidth="1" />
          <path
            d="M11.500 9H109.500V102H11.500ZM41 18.500H80M37 18.500H41M80 18.500H85M41 62.500H36V92H85V62.500H80M32 62.500H36M85 62.500H90M31 82H52L53.500 79L56 85L59 79L62 85L65 79L67.500 85L69 82H90M60.500 92V111.500M52.500 111.500H68.500M56 115H65M59 118H62"
            stroke={BLUE}
            strokeWidth="1"
            fill="none"
          />
          <path
            d="M31.500 69H40.500L36 76ZM80.500 69H89.500L85 76Z"
            fill="#fff"
            stroke={BLUE}
            strokeWidth="1"
          />
          <path d="M31 77H41M80 77H90M36 47.500H46M75 47.500H85" stroke={BLUE} strokeWidth="1" opacity=".8" />
          <CurrentSource x={41} />
          <CurrentSource x={80} />
          {joints.map(([x, y]) => (
            <circle key={`${x}-${y}`} cx={x} cy={y} r="1.300" />
          ))}
        </Canvas>
      </Shot>
    </section>
  );
}

export default function App() {
  return (
    <main className="flex min-h-screen gap-[50px] bg-white font-['Liberation_Sans',Arial,sans-serif]">
      <PlaceColumn />
      <WireColumn />
      <SimulateColumn />
      <SaveColumn />
    </main>
  );
}
